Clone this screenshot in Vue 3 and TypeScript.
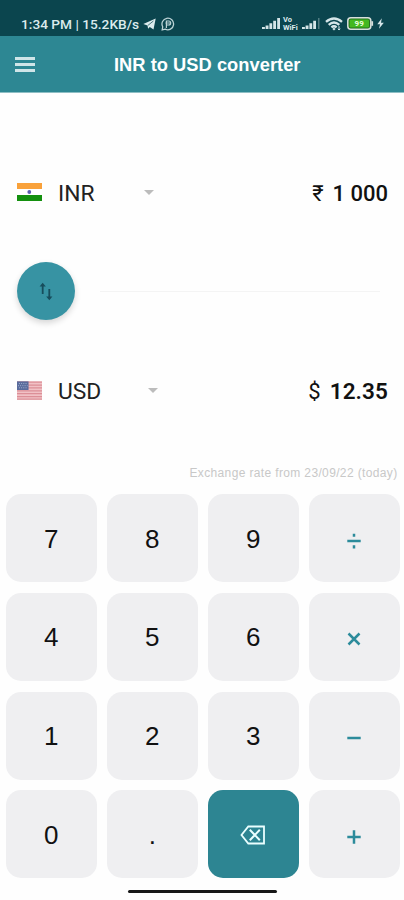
<script setup lang="ts">
import { ref } from 'vue'

interface Key {
  id: string
  kind: 'digit' | 'operator' | 'erase'
  path?: string
}

const amount = ref('1 000')
const converted = ref('12.35')

const keys: Key[] = [
  { id: '7', kind: 'digit' },
  { id: '8', kind: 'digit' },
  { id: '9', kind: 'digit' },
  { id: 'divide', kind: 'operator', path: 'M1.3 8H14.7M8 .7v3.1M8 12.3v3.1' },
  { id: '4', kind: 'digit' },
  { id: '5', kind: 'digit' },
  { id: '6', kind: 'digit' },
  { id: 'multiply', kind: 'operator', path: 'M2.5 2.5L13.5 13.5M13.5 2.5L2.5 13.5' },
  { id: '1', kind: 'digit' },
  { id: '2', kind: 'digit' },
  { id: '3', kind: 'digit' },
  { id: 'subtract', kind: 'operator', path: 'M1.3 8H14.7' },
  { id: '0', kind: 'digit' },
  { id: '.', kind: 'digit' },
  { id: 'erase', kind: 'erase' },
  { id: 'add', kind: 'operator', path: 'M1.3 8H14.7M8 1.3V14.7' },
]
</script>

<template>
  <main class="screen">
    <div class="status">
      <span class="clock">1:34 PM | 15.2KB/s</span>
      <svg class="plane" width="13" height="12" viewBox="0 0 13 12"><path d="M.3 6.1L12.7.5 10.5 11.5 6.8 8.9 5.1 10.8 4.5 7.6Z" fill="#dcebed" /><path d="M4.8 7.5L10.4 3" stroke="#0b454e" stroke-width=".7" /></svg>
      <svg class="badge" width="14" height="14" viewBox="0 0 14 14" fill="none" stroke="#bcd3d6"><path d="M1.2 12.9L1.7 9.8A5.8 5.8 0 1 1 4.2 12.2Z" stroke-width="1.3" /><path d="M5.4 11V4H7.7A2 2 0 0 1 7.7 8H5.4M4.4 6H9" stroke-width="1.2" /></svg>
      <div class="indicators">
        <svg width="18" height="11" viewBox="0 0 18 11" fill="#d5e5e8"><path d="M0 9h2.9v2H0zM3.6 7.5h2.9V11H3.6zM7.4 5.2h2.8V11H7.4zM11.2 2.7H14V11h-2.8zM15.2 0H18v11h-2.8z" /></svg>
        <span class="volte"><span>Vo</span><span>WiFi</span></span>
        <svg width="18" height="11" viewBox="0 0 18 11" fill="#d5e5e8"><path d="M0 9h2.9v2H0zM3.6 7.5h2.9V11H3.6zM7.4 5.2h2.8V11H7.4zM11.2 2.7H14V11h-2.8z" /><path opacity=".35" d="M16 0h1.5v11H16z" /></svg>
        <svg class="wifi" width="18" height="14" viewBox="0 0 18 14" fill="none" stroke="#d5e5e8" stroke-width="2.3"><path d="M1 4.9Q9-2 17 4.9M3.7 7.8Q9 3.3 14.3 7.8M6.4 10.3Q9 8.2 11.6 10.3" /><path d="M9 10.5L10.6 12 9 13.6 7.4 12Z" fill="#d5e5e8" stroke="none" /><path d="M14 9.2V13M12.8 11.8L14 13l1.3-1.2" stroke-width="1" /></svg>
        <svg class="battery" width="27" height="13" viewBox="0 0 27 13"><rect x=".8" y=".8" width="23" height="11.4" rx="3" fill="#25701f" stroke="#d8dfdc" stroke-width="1.5" /><rect x="2.6" y="2.5" width="19.4" height="8" rx="1" fill="#43b820" /><path d="M25.2 4.2v4.6" stroke="#d8dfdc" stroke-width="1.8" /><text x="12.2" y="9.3" text-anchor="middle" font-size="8" font-weight="700" fill="#eaffdf">99</text></svg>
        <svg width="7" height="11" viewBox="0 0 7 11"><path d="M4.8.3L.3 6.2H3L2 10.8 6.8 4.8H4Z" fill="#d5e5e8" /></svg>
      </div>
    </div>

    <header class="toolbar">
      <button class="menu" aria-label="Menu"><i></i><i></i><i></i></button>
      <h1>INR to USD converter</h1>
    </header>

    <section class="converter">
      <div class="currency inr">
        <svg class="flag" width="25" height="18" viewBox="0 0 25 18"><path fill="#f9a13a" d="M0 0h25v6H0z" /><path fill="#fff" d="M0 6h25v6H0z" /><path fill="#14900f" d="M0 12h25v6H0z" /><circle cx="12.3" cy="9" r="1.9" fill="#5b5bb0" /></svg>
        <span class="code">INR</span>
        <svg class="caret" width="10" height="5" viewBox="0 0 10 5"><path d="M0 0h10L5 5Z" fill="#bcbcbc" /></svg>
        <span class="amount"><span class="symbol">₹</span><b>{{ amount }}</b></span>
      </div>

      <div class="swap-row">
        <button class="swap" aria-label="Swap currencies">
          <svg width="14" height="19" viewBox="0 0 14 19" fill="none" stroke="#174d5c" stroke-width="1.8"><path d="M3.7 12V2M10.3 7v10" /><path d="M.6 4.6L3.7.8 6.8 4.6ZM7.2 14.4L10.3 18.2 13.4 14.4Z" fill="#174d5c" stroke="none" /></svg>
        </button>
        <span class="rule"></span>
      </div>

      <div class="currency usd">
        <svg class="flag" width="26" height="19" viewBox="0 0 26 19"><path fill="#f1c1c5" d="M0 0h26v19H0z" /><path d="M0 .8h26M0 3.8h26M0 6.8h26M0 9.8h26M0 12.8h26M0 15.8h26M0 18.4h26" stroke="#dc8f97" stroke-width="1.3" /><path fill="#596b9c" d="M0 0h12v9H0z" /><path d="M2 2.3h9M1 4.5h10M2 6.7h9" stroke="#a8b4d0" stroke-dasharray="1 1.3" /></svg>
        <span class="code">USD</span>
        <svg class="caret" width="10" height="5" viewBox="0 0 10 5"><path d="M0 0h10L5 5Z" fill="#bcbcbc" /></svg>
        <span class="amount"><span class="symbol">$</span><b>{{ converted }}</b></span>
      </div>

      <p class="note">Exchange rate from 23/09/22 (today)</p>
    </section>

    <section class="keypad">
      <button v-for="key in keys" :key="key.id" class="key" :class="key.kind" :aria-label="key.id">
        <span v-if="key.kind === 'digit'">{{ key.id }}</span>
        <svg v-else-if="key.kind === 'operator'" width="16" height="16" viewBox="0 0 16 16"><path :d="key.path" fill="none" stroke="#2c8b9b" stroke-width="2.5" /></svg>
        <svg v-else width="26" height="20" viewBox="0 0 26 20" fill="none" stroke="#eaffff"><path d="M8.3 1.5H24v17H8.3L1.5 10Z" stroke-width="1.8" /><path d="M9.8 4.8L19.8 15.2M19.8 4.8L9.8 15.2" stroke-width="2" /></svg>
      </button>
    </section>

    <footer class="gesture"><i></i></footer>
  </main>
</template>

<style>
body {
  margin: 0;
  background: #fff;
}
</style>

<style scoped>
.screen {
  box-sizing: border-box;
  width: 404px;
  height: 900px;
  overflow: hidden;
  display: flex;
  flex-direction: column;
  background: #fefefe;
  color: #111;
  font-family: Roboto, "Liberation Sans", sans-serif;
}
button {
  border: 0;
  padding: 0;
  font: inherit;
  color: inherit;
}
svg {
  display: block;
  flex: none;
}
.status {
  box-sizing: border-box;
  height: 36px;
  flex: none;
  display: flex;
  align-items: center;
  padding: 11px 20px 0 21px;
  background: #0b454e;
  color: #dcebed;
}
.clock {
  width: 119px;
  font-size: 13.7px;
  font-weight: 500;
  line-height: 16px;
  white-space: nowrap;
}
.plane {
  margin-left: 3px;
}
.badge {
  margin-left: 5px;
}
.indicators {
  display: flex;
  align-items: center;
  margin-left: auto;
}
.volte {
  width: 16px;
  margin: 0 3px 0 3px;
  display: flex;
  flex-direction: column;
  font-size: 7.5px;
  font-weight: 700;
  line-height: 8px;
}
.wifi {
  margin-left: 5px;
}
.battery {
  margin: 0 3px 0 4px;
}
.toolbar {
  height: 56px;
  flex: none;
  display: flex;
  align-items: center;
  padding-left: 15px;
  background: #2d8793;
  border-bottom: 1px solid #8ebec4;
  color: #fff;
}
.menu {
  width: 20px;
  display: flex;
  flex-direction: column;
  gap: 3px;
  background: none;
}
.menu i {
  height: 3px;
  background: #cfe5e8;
}
h1 {
  margin: 1px 0 0 79px;
  font-family: "Liberation Sans", Arial, sans-serif;
  font-size: 18.3px;
  font-weight: 700;
  letter-spacing: 0.03px;
  white-space: nowrap;
}
.converter {
  height: 401px;
  flex: none;
  display: flex;
  flex-direction: column;
}
.currency {
  height: 40px;
  display: flex;
  align-items: center;
  padding: 0 16px 0 17px;
  font-size: 22px;
}
.inr {
  margin-top: 79px;
}
.usd {
  margin-top: 50px;
}
.flag {
  width: 25px;
}
.code {
  width: 86px;
  margin-left: 16px;
  color: #222;
  padding-top: 3px;
  font-size: 22.8px;
}
.usd .code {
  width: 90px;
}
.amount {
  margin-left: auto;
  padding-top: 2px;
  display: flex;
  align-items: center;
}
.amount b {
  font-weight: 500;
}
.usd b {
  font-size: 22.5px;
  letter-spacing: 0.1px;
  font-weight: 600;
}
.symbol {
  margin-right: 9px;
}
.swap-row {
  height: 58px;
  margin: 50px 24px 0 17px;
  display: flex;
  align-items: center;
  gap: 25px;
}
.swap {
  width: 58px;
  height: 58px;
  flex: none;
  display: grid;
  place-items: center;
  border-radius: 50%;
  background: #3793a3;
  box-shadow: 0 3px 6px rgba(0, 0, 0, 0.16);
}
.rule {
  height: 1px;
  flex: 1;
  background: #f4f4f4;
}
.note {
  margin: 55px 6.5px 0 0;
  text-align: right;
  font-family: "Liberation Sans", Arial, sans-serif;
  font-size: 12px;
  letter-spacing: 0.36px;
  line-height: 17px;
  color: #c8c8c8;
}
.keypad {
  flex: none;
  display: grid;
  grid-template-columns: repeat(4, 90.5px);
  grid-template-rows: repeat(4, 88px);
  gap: 10.8px 10.5px;
  padding: 0 0 0 6px;
}
.key {
  display: grid;
  place-items: center;
  border-radius: 15px;
  background: #efeff1;
  font-family: "Liberation Sans", Arial, sans-serif;
  font-size: 26px;
}
.digit span {
  padding-top: 2px;
}
.operator {
  padding-top: 5px;
}
.erase {
  padding-top: 2px;
  background: #2d8592;
}
.gesture {
  padding-top: 12px;
  display: flex;
  justify-content: center;
}
.gesture i {
  width: 149px;
  height: 3px;
  border-radius: 2px;
  background: #171717;
}
</style>
